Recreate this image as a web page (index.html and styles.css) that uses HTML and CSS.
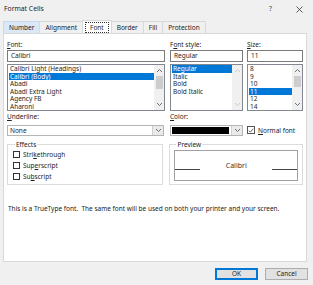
FILE: index.html
```html
<!DOCTYPE html>
<html>
<head>
<meta charset="utf-8">
<link rel="stylesheet" href="styles.css">
</head>
<body>
<div class="dialog">
  <div class="titlebar">
    <span class="title">Format Cells</span>
    <span class="help">?</span>
    <svg class="close" width="7" height="7" viewBox="0 0 7 7"><path d="M0.5 0.5L6.5 6.5M6.5 0.5L0.5 6.5" stroke="#333" stroke-width="0.8"/></svg>
  </div>
  <div class="tabs">
    <div class="tab hover">Number</div>
    <div class="tab">Alignment</div>
    <div class="tab active"><span class="focus">Font</span></div>
    <div class="tab">Border</div>
    <div class="tab">Fill</div>
    <div class="tab">Protection</div>
  </div>
  <div class="panel">
    <div class="toprow">
      <div class="col col-font">
        <div class="label"><u>F</u>ont:</div>
        <div class="input">Calibri</div>
        <div class="list">
          <div class="items">
            <div class="item">Calibri Light (Headings)</div>
            <div class="item sel">Calibri (Body)</div>
            <div class="item">Abadi</div>
            <div class="item">Abadi Extra Light</div>
            <div class="item">Agency FB</div>
            <div class="item">Aharoni</div>
          </div>
          <div class="scroll">
            <svg class="arr" width="7" height="5" viewBox="0 0 7 5"><path d="M1 4L3.5 1.5L6 4" fill="none" stroke="#606060" stroke-width="0.9"/></svg>
            <div class="thumb"></div>
            <div class="spacer"></div>
            <svg class="arr" width="7" height="5" viewBox="0 0 7 5"><path d="M1 1L3.5 3.5L6 1" fill="none" stroke="#606060" stroke-width="0.9"/></svg>
          </div>
        </div>
      </div>
      <div class="col col-style">
        <div class="label">F<u>o</u>nt style:</div>
        <div class="input">Regular</div>
        <div class="list">
          <div class="items">
            <div class="item sel">Regular</div>
            <div class="item">Italic</div>
            <div class="item">Bold</div>
            <div class="item">Bold Italic</div>
          </div>
          <div class="scroll">
            <svg class="arr" width="7" height="5" viewBox="0 0 7 5"><path d="M1 4L3.5 1.5L6 4" fill="none" stroke="#c4c4c4" stroke-width="0.9"/></svg>
            <div class="spacer"></div>
            <svg class="arr" width="7" height="5" viewBox="0 0 7 5"><path d="M1 1L3.5 3.5L6 1" fill="none" stroke="#c4c4c4" stroke-width="0.9"/></svg>
          </div>
        </div>
      </div>
      <div class="col col-size">
        <div class="label"><u>S</u>ize:</div>
        <div class="input">11</div>
        <div class="list">
          <div class="items">
            <div class="item">8</div>
            <div class="item">9</div>
            <div class="item">10</div>
            <div class="item sel">11</div>
            <div class="item">12</div>
            <div class="item">14</div>
          </div>
          <div class="scroll">
            <svg class="arr" width="7" height="5" viewBox="0 0 7 5"><path d="M1 4L3.5 1.5L6 4" fill="none" stroke="#606060" stroke-width="0.9"/></svg>
            <div class="thumb small"></div>
            <div class="spacer"></div>
            <svg class="arr" width="7" height="5" viewBox="0 0 7 5"><path d="M1 1L3.5 3.5L6 1" fill="none" stroke="#606060" stroke-width="0.9"/></svg>
          </div>
        </div>
      </div>
    </div>

    <div class="midrow">
      <div class="col col-under">
        <div class="label"><u>U</u>nderline:</div>
        <div class="select">
          <span class="val">None</span>
          <span class="drop"><svg width="7" height="5" viewBox="0 0 7 5"><path d="M1 1L3.5 3.5L6 1" fill="none" stroke="#606060" stroke-width="0.9"/></svg></span>
        </div>
      </div>
      <div class="col col-style">
        <div class="label"><u>C</u>olor:</div>
        <div class="select">
          <span class="swatch"></span>
          <span class="drop"><svg width="7" height="5" viewBox="0 0 7 5"><path d="M1 1L3.5 3.5L6 1" fill="none" stroke="#606060" stroke-width="0.9"/></svg></span>
        </div>
      </div>
      <div class="col col-normal">
        <label class="check">
          <span class="box checked"><svg width="7" height="7" viewBox="0 0 7 7"><path d="M1 3.6L2.8 5.4L6 1.5" fill="none" stroke="#333" stroke-width="0.9"/></svg></span>
          <span><u>N</u>ormal font</span>
        </label>
      </div>
    </div>

    <div class="grouprow">
      <fieldset class="group effects">
        <legend>Effects</legend>
        <label class="check"><span class="box"></span><span>Stri<u>k</u>ethrough</span></label>
        <label class="check"><span class="box"></span><span>Sup<u>e</u>rscript</span></label>
        <label class="check"><span class="box"></span><span>Su<u>b</u>script</span></label>
      </fieldset>
      <fieldset class="group preview">
        <legend>Preview</legend>
        <div class="pbox">
          <span class="line"></span>
          <span class="ptext">Calibri</span>
          <span class="line"></span>
        </div>
      </fieldset>
    </div>

    <p class="note">This is a TrueType font.&nbsp; The same font will be used on both your printer and your screen.</p>
  </div>
  <div class="buttons">
    <div class="btn ok">OK</div>
    <div class="btn">Cancel</div>
  </div>
</div>
</body>
</html>
```

FILE: styles.css
```css
html, body {
  margin: 0;
  padding: 0;
  background: #f0f0f0;
}
body {
  font-family: "Noto Sans", "Open Sans", sans-serif;
  font-size: 6.5px;
  color: #1e1e1e;
  width: 313px;
  height: 285px;
  overflow: hidden;
}
u { text-decoration: underline; text-underline-offset: 1px; }
.dialog {
  display: flex;
  flex-direction: column;
  height: 285px;
}
.titlebar {
  height: 21px;
  display: flex;
  align-items: flex-start;
  padding: 4px 0 0 4px;
  box-sizing: border-box;
}
.title { font-size: 6.8px; flex: 1; color: #222; }
.help { font-size: 6.8px; margin-right: 24px; color: #444; }
.close { margin-right: 10px; margin-top: 2px; }

.tabs {
  display: flex;
  height: 12px;
  padding-left: 3px;
  position: relative;
  z-index: 1;
}
.tab {
  border: 1px solid #d9d9d9;
  border-bottom: none;
  margin-right: -1px;
  padding: 0 5px;
  line-height: 11px;
  box-sizing: border-box;
  height: 12px;
  color: #222;
}
.tab.hover { background: #dbe8f5; border-color: #c7d9ec; }
.tab.active {
  background: #fff;
  height: 13px;
  margin-top: -1px;
  padding: 1px 2px 0;
  line-height: 10px;
}
.tab.active .focus {
  display: block;
  border: 1px dotted #333;
  padding: 0 4px;
  line-height: 9px;
}

.panel {
  background: #fff;
  margin: 0 6px 0 3px;
  border: 1px solid #d9d9d9;
  height: 229px;
  box-sizing: border-box;
  padding: 7px 3px 0 3px;
  display: flex;
  flex-direction: column;
}
.toprow, .midrow, .grouprow {
  display: flex;
}
.col { display: flex; flex-direction: column; }
.col-font { width: 158px; margin-right: 5px; }
.col-style { width: 73px; margin-right: 4px; }
.col-size { width: 56px; }
.col-under { width: 157px; margin-right: 6px; }
.label {
  height: 8px;
  line-height: 8px;
  margin-bottom: 1px;
  color: #222;
}
.input {
  height: 12px;
  border: 1px solid #7a7a7a;
  box-sizing: border-box;
  line-height: 10px;
  padding-left: 3px;
  margin-bottom: 2px;
}
.list {
  height: 47px;
  border: 1px solid #828790;
  box-sizing: border-box;
  display: flex;
  overflow: hidden;
}
.items { flex: 1; padding-top: 0; min-width: 0; }
.item {
  height: 7.6px;
  line-height: 7.6px;
  padding-left: 2px;
  white-space: nowrap;
}
.item.sel { background: #0078d7; color: #fff; margin-left: 1px; padding-left: 1px; }
.scroll {
  width: 10px;
  background: #f0f0f0;
  display: flex;
  flex-direction: column;
  align-items: center;
  padding: 2px 0;
  box-sizing: border-box;
}
.arr { display: block; margin: 1px 0; }
.thumb { width: 7px; height: 13px; background: #cdcdcd; margin-top: 2px; }
.thumb.small { height: 11px; }
.spacer { flex: 1; }

.midrow { margin-top: 2px; }
.select {
  height: 11px;
  border: 1px solid #b5b5b5;
  box-sizing: border-box;
  display: flex;
  align-items: stretch;
  margin-top: 3px;
}
.select .val { flex: 1; line-height: 9px; padding-left: 2px; }
.select .swatch { flex: 1; background: #000; margin: 1px 2px 1px 1px; }
.drop {
  width: 10px;
  border-left: 1px solid #d0d0d0;
  background: #eaeaea;
  display: flex;
  align-items: center;
  justify-content: center;
}
.col-normal { justify-content: flex-end; }
.check {
  display: flex;
  align-items: center;
  gap: 3px;
  height: 8px;
}
.col-normal .check { margin-bottom: 2px; }
.col-normal .box { width: 8px; height: 8px; }
.box {
  width: 7px;
  height: 7px;
  border: 1px solid #333;
  box-sizing: border-box;
  background: #fff;
  display: flex;
  align-items: center;
  justify-content: center;
}
.box.checked { border-color: #555; }
.box svg { display: block; }

.grouprow { margin-top: 5px; gap: 6px; }
.group {
  margin: 0;
  border: 1px solid #dcdcdc;
  padding: 0;
  height: 44px;
  box-sizing: border-box;
}
.group legend {
  padding: 0 1px;
  margin-left: 2px;
  line-height: 7px;
  color: #222;
}
.effects {
  width: 157px;
  display: flex;
  flex-direction: column;
  gap: 3px;
  padding: 2px 5px 0;
}
.preview {
  width: 134px;
  padding: 2px 4px 0;
}
.pbox {
  height: 31px;
  border: 1px solid #a0a0a0;
  box-sizing: border-box;
  display: flex;
  align-items: center;
}
.pbox .line {
  width: 25px;
  height: 1px;
  background: #444;
  margin-top: 7px;
}
.pbox .ptext {
  flex: 1;
  text-align: center;
  font-size: 7px;
  color: #333;
}
.note {
  margin: 20px 0 0 1px;
  line-height: 8px;
  color: #222;
}
.buttons {
  display: flex;
  justify-content: flex-end;
  gap: 7px;
  padding: 6px 5px 0 0;
}
.btn {
  width: 43px;
  height: 12px;
  box-sizing: border-box;
  border: 1px solid #adadad;
  background: #e1e1e1;
  text-align: center;
  line-height: 10px;
}
.btn.ok { border: 1px solid #0078d7; box-shadow: inset 0 0 0 1px #0078d7; }
```
